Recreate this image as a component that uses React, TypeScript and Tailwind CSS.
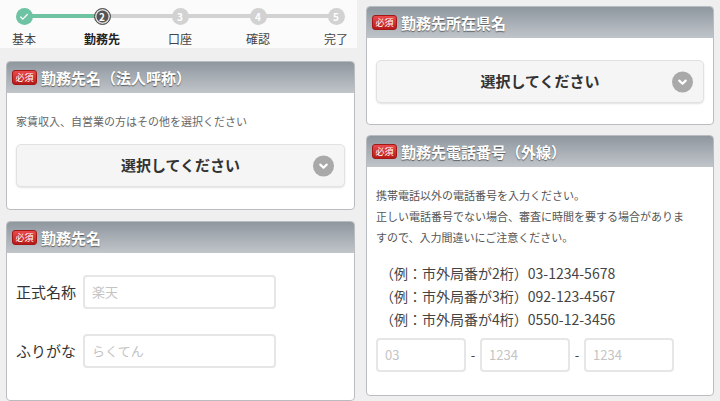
import { Check } from 'lucide-react';

const font = { fontFamily: '"Noto Sans CJK JP", "Noto Sans", sans-serif' };

// =============================================================================
// Step indicator
// =============================================================================
function Steps() {
  const labels = ['基本', '勤務先', '口座', '確認', '完了'];
  return (
    <div className="relative h-[48px] bg-[#fbfbfb] pl-[9px] pr-[6px] pt-[8px]">
      <div className="absolute left-[24px] right-[21px] top-[14px] h-[4px] bg-[#d2d2d2]" />
      <div className="absolute left-[24px] w-[77px] top-[14px] h-[4px] bg-[#6ec4a2]" />
      <div className="relative flex justify-between">
        {labels.map((l, i) => (
          <div key={l} className="flex w-[30px] flex-col items-center">
            {i === 0 && (
              <div className="flex h-[17px] w-[17px] items-center justify-center rounded-full bg-[#6ec4a2] text-white">
                <Check className="h-[10px] w-[10px]" strokeWidth={3} />
              </div>
            )}
            {i === 1 && (
              <div className="flex h-[17px] w-[17px] items-center justify-center rounded-full border-[1.5px] border-[#555] bg-[#555] shadow-[inset_0_0_0_1.5px_#ddd] text-[10px] font-bold leading-none text-white">
                2
              </div>
            )}
            {i > 1 && (
              <div className="flex h-[17px] w-[17px] items-center justify-center rounded-full bg-[#d2d2d2] text-[10px] font-bold leading-none text-white">
                {i + 1}
              </div>
            )}
            <span className={`mt-[8px] whitespace-nowrap text-[12px] leading-none ${i === 1 ? 'font-bold text-[#222]' : 'text-[#444]'}`}>
              {l}
            </span>
          </div>
        ))}
      </div>
    </div>
  );
}

// =============================================================================
// Panel with gradient header
// =============================================================================
function Panel({ title, children }: { title: string; children: React.ReactNode }) {
  return (
    <div className="overflow-hidden rounded-[4px] border border-[#b9bdc1] bg-white">
      <div className="flex h-[31px] items-center gap-[4px] bg-gradient-to-b from-[#8f979f] to-[#c0c5ca] px-[5px]">
        <span className="flex h-[15px] w-[25px] items-center justify-center rounded-[3px] border border-[#a01818] bg-gradient-to-b from-[#ea4a4a] to-[#b81818] text-[9px] leading-none text-white">
          必須
        </span>
        <span className="text-[15px] font-bold leading-none text-white [text-shadow:0_1px_1px_rgba(0,0,0,0.5)]">
          {title}
        </span>
      </div>
      {children}
    </div>
  );
}

function SelectBox() {
  return (
    <div className="relative flex h-[43px] items-center justify-center rounded-[5px] border border-[#e2e2e2] bg-[#f5f5f5] shadow-[0_1px_2px_rgba(0,0,0,0.12)]">
      <span className="text-[15px] font-bold text-[#333]">選択してください</span>
      <div className="absolute right-[10px] top-1/2 flex h-[21px] w-[21px] -translate-y-1/2 items-center justify-center rounded-full bg-[#a9a9a9]">
        <svg viewBox="0 0 12 12" className="h-[11px] w-[11px]">
          <path d="M2.5 4.5 L6 8 L9.5 4.5" fill="none" stroke="white" strokeWidth="2.4" strokeLinecap="round" strokeLinejoin="round" />
        </svg>
      </div>
    </div>
  );
}

function TextInput({ placeholder, className }: { placeholder: string; className: string }) {
  return (
    <div className={`flex items-center rounded-[4px] border-2 border-[#e6e6e6] bg-white pl-[7px] text-[13px] text-[#c4c4c4] ${className}`}>
      {placeholder}
    </div>
  );
}

// =============================================================================
// App
// =============================================================================
export default function App() {
  return (
    <div style={font} className="flex h-[401px] w-[720px] overflow-hidden bg-[#efefef]">
      {/* left column */}
      <div className="w-[357px] shrink-0">
        <Steps />
        <div className="flex flex-col gap-[11px] pl-[6px] pr-[2px] pt-[13px]">
          <Panel title="勤務先名（法人呼称）">
            <div className="px-[9px] pb-[22px] pt-[23px]">
              <p className="text-[11px] leading-none text-[#666]">家賃収入、自営業の方はその他を選択ください</p>
              <div className="mt-[17px]">
                <SelectBox />
              </div>
            </div>
          </Panel>
          <Panel title="勤務先名">
            <div className="flex flex-col gap-[25px] pb-[32px] pl-[9px] pt-[22px]">
              <div className="flex items-center gap-[7px]">
                <span className="text-[15px] text-[#333]">正式名称</span>
                <TextInput placeholder="楽天" className="h-[34px] w-[193px]" />
              </div>
              <div className="flex items-center gap-[7px]">
                <span className="text-[15px] text-[#333]">ふりがな</span>
                <TextInput placeholder="らくてん" className="h-[34px] w-[193px]" />
              </div>
            </div>
          </Panel>
        </div>
      </div>

      {/* right column */}
      <div className="flex flex-1 flex-col gap-[10px] pl-[9px] pr-[6px] pt-[6px]">
        <Panel title="勤務先所在県名">
          <div className="px-[9px] pb-[21px] pt-[22px]">
            <SelectBox />
          </div>
        </Panel>
        <Panel title="勤務先電話番号（外線）">
          <div className="px-[9px] pb-[23px] pt-[18px]">
            <p className="text-[11px] leading-[21px] text-[#555]">携帯電話以外の電話番号を入力ください。</p>
            <p className="text-[11px] leading-[21px] text-[#555]">
              正しい電話番号でない場合、審査に時間を要する場合がありま
              <br />
              すので、入力間違いにご注意ください。
            </p>
            <div className="mt-[14px] pl-[4px] text-[14px] leading-[23px] text-[#444]">
              <p>（例：市外局番が2桁）03-1234-5678</p>
              <p>（例：市外局番が3桁）092-123-4567</p>
              <p>（例：市外局番が4桁）0550-12-3456</p>
            </div>
            <div className="mt-[7px] flex items-center">
              <TextInput placeholder="03" className="h-[34px] w-[90px]" />
              <span className="w-[14px] text-center text-[13px] text-[#444]">-</span>
              <TextInput placeholder="1234" className="h-[34px] w-[90px]" />
              <span className="w-[14px] text-center text-[13px] text-[#444]">-</span>
              <TextInput placeholder="1234" className="h-[34px] w-[90px]" />
            </div>
          </div>
        </Panel>
      </div>
    </div>
  );
}
